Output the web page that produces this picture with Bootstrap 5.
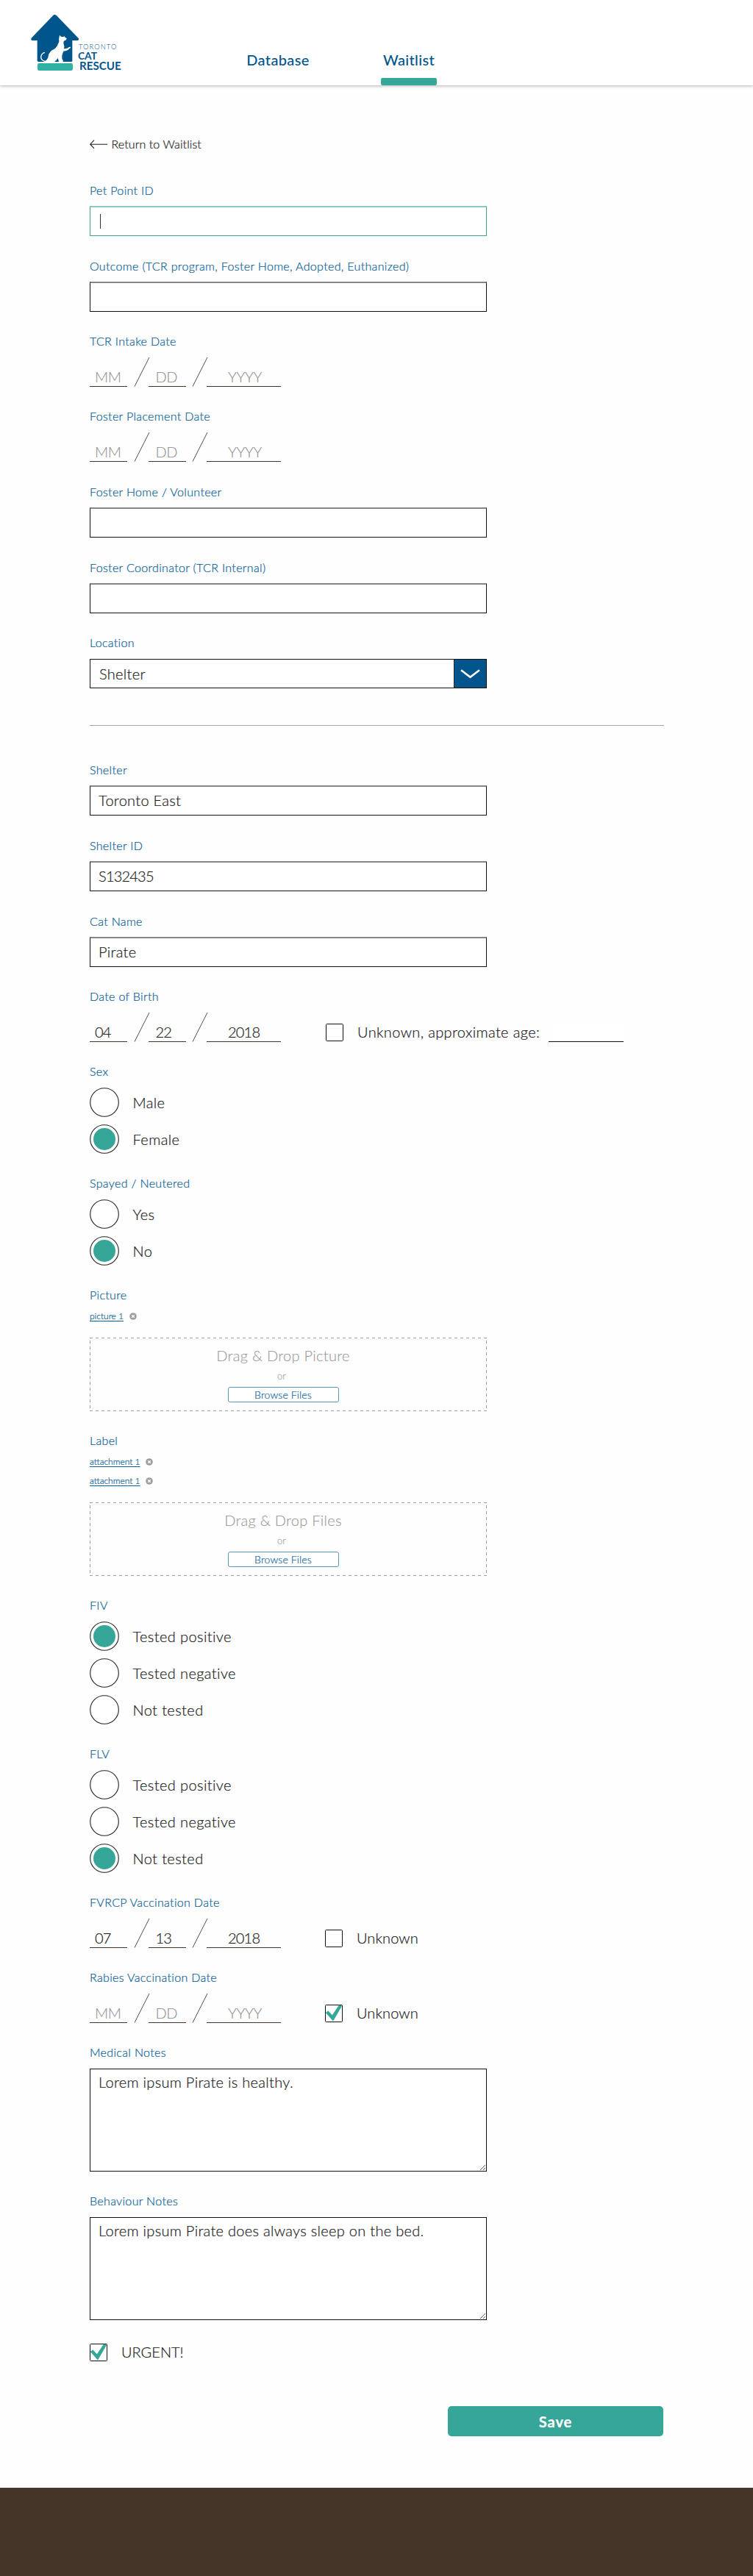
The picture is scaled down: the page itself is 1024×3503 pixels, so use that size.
<!DOCTYPE html>
<html lang="en">
<head>
<meta charset="utf-8">
<meta name="viewport" content="width=device-width, initial-scale=1">
<title>Toronto Cat Rescue – Waitlist</title>
<link href="https://cdn.jsdelivr.net/npm/bootstrap@5.3.0/dist/css/bootstrap.min.css" rel="stylesheet">
<style>
:root{--tcr-blue:#00558c;--tcr-teal:#35a697;--tcr-ink:#1c1c1c;--tcr-grey:#a3a3a3;--tcr-brown:#453528}
body{font-family:Lato,"Liberation Sans",sans-serif;font-weight:300;font-size:20px;line-height:24px;color:var(--tcr-ink);background:#fefefe;-webkit-text-stroke:.22px currentColor}
.site-head{height:116px;padding:0 0 0 41px;background:#fff;box-shadow:0 1px 4px rgba(0,0,0,.3);-webkit-text-stroke:0}
.logo-box{width:291px;padding-top:18px}
.site-nav{gap:94px}
.site-nav .nav-link{height:116px;padding:69px 0 0;color:var(--tcr-blue);font-size:20px;font-weight:500;line-height:24px;letter-spacing:.35px}
.site-nav .nav-link::after{content:"";display:block;height:10px;margin-top:13px;border-radius:2px}
.site-nav .nav-link.active::after{background:var(--tcr-teal)}
.nav-db{width:92px}.nav-wl{width:76px}
.page{width:780px;margin-left:122px;padding-top:68px}
.back-link{color:var(--tcr-ink);font-size:16px;gap:5.5px;margin-bottom:39px;width:max-content;letter-spacing:.1px}
.field{margin-bottom:28px}
.field-line{margin-top:1px}
.field-line.flush{margin-top:0}
.field-title{display:block;font-size:16px;line-height:24px;letter-spacing:.34px;color:#0b5f98;margin:0 0 10px}
.field-line>.field-title{margin-bottom:9px}
.box-w{width:540px}
.line-input{height:41px;padding:0 11px 2px;border:1px solid #111;border-top:2px solid #868686;border-radius:0;background:#fff!important;font-size:20px;font-weight:300;color:var(--tcr-ink);letter-spacing:.3px;box-shadow:none!important;-webkit-text-stroke:.22px currentColor}
.line-input.digits{letter-spacing:-.8px}
.line-input.is-current{border-color:#8ccbc2 var(--tcr-teal) var(--tcr-teal);display:flex;align-items:center;padding-top:2px}
.caret{width:1px;height:20px;margin-left:2px;background:#333}
.pick{height:40px;border:1px solid #111;background:#fff;letter-spacing:.3px}
.pick-btn{width:44px;background:var(--tcr-blue);border-left:1px solid #222}
.rule{width:781px;height:1px;background:#a6a6a6;margin:22px 0 48px}
.date-row{height:40px}
.part{height:28px;border:0;border-bottom:1px solid #453528;border-radius:0;padding:0;background:transparent;font-size:20px;font-weight:300;color:var(--tcr-ink);letter-spacing:-.8px;flex:none;-webkit-text-stroke:.22px currentColor}
.part::placeholder{color:#8f8f8f;opacity:1;letter-spacing:-.4px;-webkit-text-stroke:.1px currentColor}
.p-mm{width:51px;padding-left:7px}.p-dd{width:51px;padding-left:10px}.p-yy{width:101px;padding-left:29px}
.slash{width:19px;height:40px;margin-left:9.5px;flex:none;overflow:visible}
.unk{margin-left:60px;gap:19px;height:24px;margin-bottom:1px;letter-spacing:.1px}
.unk.wide{margin-left:61px;letter-spacing:.36px}
.unk label,.urgent label{padding-bottom:2px}
.tick-box{width:24px;height:24px;flex:none}
.age{width:102px;margin-left:-7px;border:0;border-bottom:1px solid #111;padding:0;height:25px;margin-top:1px;border-radius:0}
.options{gap:10px}
.opt{height:40px;gap:18.5px;letter-spacing:.4px}
.dial{width:40px;height:40px;flex:none}
.file-list{margin:-6px 0 16px;font-size:12px}
.file-list li{height:26px;gap:7.5px;line-height:26px}
.file-list a{color:#0b5f98;text-decoration:underline;text-underline-offset:1.5px;text-decoration-thickness:1px}
.drop{height:100px;padding:12px 14px 0 0;color:#999;-webkit-text-stroke:.12px currentColor;
 background:
 repeating-linear-gradient(90deg,#a0a0a0 0 4px,transparent 4px 8px) 0 0/100% 1px no-repeat,
 repeating-linear-gradient(90deg,#a0a0a0 0 4px,transparent 4px 8px) 0 100%/100% 1px no-repeat,
 repeating-linear-gradient(180deg,transparent 0 4px,#a0a0a0 4px 8px) 0 0/1px 100% no-repeat,
 repeating-linear-gradient(180deg,transparent 0 4px,#a0a0a0 4px 8px) 100% 0/1px 100% no-repeat}
.drop-title{letter-spacing:.3px}
.drop-or{font-size:13px;line-height:18px;margin:7px 4px 6px 0}
.browse{width:151px;height:21px;padding:0;border:1px solid #5b94bb;border-radius:3px;background:#fff;color:#0b5f98;font-size:14px;font-weight:300;line-height:18px;letter-spacing:.15px;-webkit-text-stroke:.2px currentColor}
.notes{height:140px;padding:5px 11px;border:1px solid #111;border-radius:0;background:#fff;font-size:20px;font-weight:300;line-height:24px;color:var(--tcr-ink);letter-spacing:.3px;resize:both;-webkit-text-stroke:.22px currentColor}
.urgent{gap:19px;margin-top:4px;height:24px}
.save-row{width:780px;margin:61px 0 70px}
.save{width:293px;height:41px;padding:0;border:0;border-radius:5px;background:var(--tcr-teal);color:#fff;font-size:20px;font-weight:700;letter-spacing:.9px}
.site-foot{height:120px;background:var(--tcr-brown)}
</style>
</head>
<body>
<svg width="0" height="0" class="position-absolute" aria-hidden="true">
 <symbol id="s-slash" viewBox="0 0 19 40" overflow="visible"><path d="M0 39.5 20 0" stroke="#5c4e43" fill="none"/></symbol>
 <symbol id="s-off" viewBox="0 0 40 40"><circle cx="20" cy="20" r="19.3" fill="#fff" stroke="#222" stroke-width="1.1"/></symbol>
 <symbol id="s-on" viewBox="0 0 40 40"><circle cx="20" cy="20" r="19.3" fill="#fff" stroke="#222" stroke-width="1.1"/><circle cx="20" cy="20" r="15" fill="#35a697"/></symbol>
 <symbol id="s-box" viewBox="0 0 24 24"><rect x=".5" y=".5" width="23" height="23" rx="1" fill="#fff" stroke="#111"/></symbol>
 <symbol id="s-tick" viewBox="0 0 24 24"><rect x=".5" y=".5" width="23" height="23" rx="1" fill="#fff" stroke="#111"/><path d="M.8 10.9 4.2 8.2 9.9 14.3 19 .6 23.2 1.6 11 22.4Z" fill="#35a697"/></symbol>
 <symbol id="s-del" viewBox="0 0 10 10"><circle cx="5" cy="5" r="4.8" fill="#9e9e9e"/><path d="M3.2 3.2 6.8 6.8M6.8 3.2 3.2 6.8" stroke="#fff" stroke-width="1.3"/></symbol>
</svg>

<header class="site-head d-flex">
 <div class="logo-box">
  <svg width="126" height="80" viewBox="33 24 378 240" role="img" aria-label="Toronto Cat Rescue">
   <path d="M126 34Q133 26 141 34L230 126Q234 134 226 135H205V218Q205 222 201 222H67Q62 222 62 217V135H42Q34 133 38 125Z" fill="#00558c"/>
   <rect x="63" y="228" width="144" height="30" rx="7" fill="#2fb2a3"/>
   <path d="M153 113 160 120 170 120 173 117 175 122 182 126 180 133 170 138 169 147Q174 158 171 169L184 167Q189 161 198 161L198 165Q192 168 188 173Q179 179 170 178Q165 188 163 197Q161 209 168 219L166 222H150Q149 213 145 207Q142 216 134 219V222H88Q101 218 106 205Q107 187 122 175Q140 168 145 153L151 140Q149 129 153 113Z" fill="#fff"/>
   <path d="M93 184Q79 187 77 202Q77 217 94 220" fill="none" stroke="#fff" stroke-width="4"/>
   <g fill="#00558c" font-family="Lato, sans-serif">
    <text x="231" y="170" font-size="28" font-weight="300" textLength="154">TORONTO</text>
    <text x="228" y="212" font-size="41" font-weight="700" textLength="78" lengthAdjust="spacingAndGlyphs">CAT</text>
    <text x="234" y="254" font-size="43" font-weight="700" textLength="170" lengthAdjust="spacingAndGlyphs">RESCUE</text>
   </g>
  </svg>
 </div>
 <nav class="site-nav nav flex-nowrap text-center">
  <a class="nav-link nav-db" href="#">Database</a>
  <a class="nav-link nav-wl active" href="#">Waitlist</a>
 </nav>
</header>

<main class="page d-flex flex-column">
 <a class="back-link d-flex align-items-center text-decoration-none" href="#">
  <svg width="24" height="12" viewBox="0 0 24 12" fill="none" stroke="#1c1c1c" stroke-width="1.1"><path d="M24 6.2H.8M6 .6.7 6.2 6 11.8"/></svg>Return to Waitlist</a>

 <div class="field field-line flush box-w"><label class="field-title">Pet Point ID</label><div class="form-control line-input is-current"><span class="caret"></span></div></div>
 <div class="field field-line box-w"><label class="field-title">Outcome (TCR program, Foster Home, Adopted, Euthanized)</label><input class="form-control line-input"></div>
 <div class="field"><label class="field-title">TCR Intake Date</label>
  <div class="date-row d-flex align-items-end"><input class="part p-mm" placeholder="MM"><svg class="slash"><use href="#s-slash"/></svg><input class="part p-dd" placeholder="DD"><svg class="slash"><use href="#s-slash"/></svg><input class="part p-yy" placeholder="YYYY"></div></div>
 <div class="field"><label class="field-title">Foster Placement Date</label>
  <div class="date-row d-flex align-items-end"><input class="part p-mm" placeholder="MM"><svg class="slash"><use href="#s-slash"/></svg><input class="part p-dd" placeholder="DD"><svg class="slash"><use href="#s-slash"/></svg><input class="part p-yy" placeholder="YYYY"></div></div>
 <div class="field field-line box-w"><label class="field-title">Foster Home / Volunteer</label><input class="form-control line-input"></div>
 <div class="field field-line box-w"><label class="field-title">Foster Coordinator (TCR Internal)</label><input class="form-control line-input"></div>
 <div class="field box-w"><label class="field-title">Location</label>
  <div class="pick d-flex" role="combobox"><span class="d-flex align-items-center flex-grow-1 ps-2"><span class="ms-1">Shelter</span></span><span class="pick-btn d-flex align-items-center justify-content-center"><svg width="27" height="13" viewBox="0 0 27 13" fill="none" stroke="#fff" stroke-width="2.5"><path d="M1 1.2 13.5 10.8 26 1.2"/></svg></span></div></div>

 <div class="rule"></div>

 <div class="field field-line flush box-w"><label class="field-title">Shelter</label><input class="form-control line-input" value="Toronto East"></div>
 <div class="field field-line box-w"><label class="field-title">Shelter ID</label><input class="form-control line-input digits" value="S132435"></div>
 <div class="field field-line box-w"><label class="field-title">Cat Name</label><input class="form-control line-input" value="Pirate"></div>
 <div class="field"><label class="field-title">Date of Birth</label>
  <div class="date-row d-flex align-items-end"><input class="part p-mm" value="04"><svg class="slash"><use href="#s-slash"/></svg><input class="part p-dd" value="22"><svg class="slash"><use href="#s-slash"/></svg><input class="part p-yy" value="2018">
   <div class="unk wide d-flex align-items-center"><svg class="tick-box"><use href="#s-box"/></svg><label>Unknown, approximate age:</label><input class="age"></div></div></div>
 <div class="field"><label class="field-title">Sex</label><div class="options d-flex flex-column">
  <div class="opt d-flex align-items-center"><svg class="dial"><use href="#s-off"/></svg>Male</div>
  <div class="opt d-flex align-items-center"><svg class="dial"><use href="#s-on"/></svg>Female</div></div></div>
 <div class="field"><label class="field-title">Spayed / Neutered</label><div class="options d-flex flex-column">
  <div class="opt d-flex align-items-center"><svg class="dial"><use href="#s-off"/></svg>Yes</div>
  <div class="opt d-flex align-items-center"><svg class="dial"><use href="#s-on"/></svg>No</div></div></div>
 <div class="field box-w"><label class="field-title">Picture</label>
  <ul class="file-list list-unstyled"><li class="d-flex align-items-center"><a href="#">picture 1</a><svg width="10" height="10"><use href="#s-del"/></svg></li></ul>
  <div class="drop d-flex flex-column align-items-center"><div class="drop-title">Drag &amp; Drop Picture</div><div class="drop-or">or</div><button class="btn browse">Browse Files</button></div></div>
 <div class="field box-w"><label class="field-title">Label</label>
  <ul class="file-list list-unstyled"><li class="d-flex align-items-center"><a href="#">attachment 1</a><svg width="10" height="10"><use href="#s-del"/></svg></li><li class="d-flex align-items-center"><a href="#">attachment 1</a><svg width="10" height="10"><use href="#s-del"/></svg></li></ul>
  <div class="drop d-flex flex-column align-items-center"><div class="drop-title">Drag &amp; Drop Files</div><div class="drop-or">or</div><button class="btn browse">Browse Files</button></div></div>
 <div class="field"><label class="field-title">FIV</label><div class="options d-flex flex-column">
  <div class="opt d-flex align-items-center"><svg class="dial"><use href="#s-on"/></svg>Tested positive</div>
  <div class="opt d-flex align-items-center"><svg class="dial"><use href="#s-off"/></svg>Tested negative</div>
  <div class="opt d-flex align-items-center"><svg class="dial"><use href="#s-off"/></svg>Not tested</div></div></div>
 <div class="field"><label class="field-title">FLV</label><div class="options d-flex flex-column">
  <div class="opt d-flex align-items-center"><svg class="dial"><use href="#s-off"/></svg>Tested positive</div>
  <div class="opt d-flex align-items-center"><svg class="dial"><use href="#s-off"/></svg>Tested negative</div>
  <div class="opt d-flex align-items-center"><svg class="dial"><use href="#s-on"/></svg>Not tested</div></div></div>
 <div class="field"><label class="field-title">FVRCP Vaccination Date</label>
  <div class="date-row d-flex align-items-end"><input class="part p-mm" value="07"><svg class="slash"><use href="#s-slash"/></svg><input class="part p-dd" value="13"><svg class="slash"><use href="#s-slash"/></svg><input class="part p-yy" value="2018">
   <div class="unk d-flex align-items-center"><svg class="tick-box"><use href="#s-box"/></svg><label>Unknown</label></div></div></div>
 <div class="field"><label class="field-title">Rabies Vaccination Date</label>
  <div class="date-row d-flex align-items-end"><input class="part p-mm" placeholder="MM"><svg class="slash"><use href="#s-slash"/></svg><input class="part p-dd" placeholder="DD"><svg class="slash"><use href="#s-slash"/></svg><input class="part p-yy" placeholder="YYYY">
   <div class="unk d-flex align-items-center"><svg class="tick-box"><use href="#s-tick"/></svg><label>Unknown</label></div></div></div>
 <div class="field box-w"><label class="field-title">Medical Notes</label><textarea class="form-control notes">Lorem ipsum Pirate is healthy.</textarea></div>
 <div class="field box-w"><label class="field-title">Behaviour Notes</label><textarea class="form-control notes">Lorem ipsum Pirate does always sleep on the bed.</textarea></div>
 <div class="urgent d-flex align-items-center"><svg class="tick-box"><use href="#s-tick"/></svg><label>URGENT!</label></div>
 <div class="save-row d-flex justify-content-end"><button class="btn save">Save</button></div>
</main>
<footer class="site-foot"></footer>
<script src="https://cdn.jsdelivr.net/npm/bootstrap@5.3.0/dist/js/bootstrap.bundle.min.js"></script>
</body>
</html>
